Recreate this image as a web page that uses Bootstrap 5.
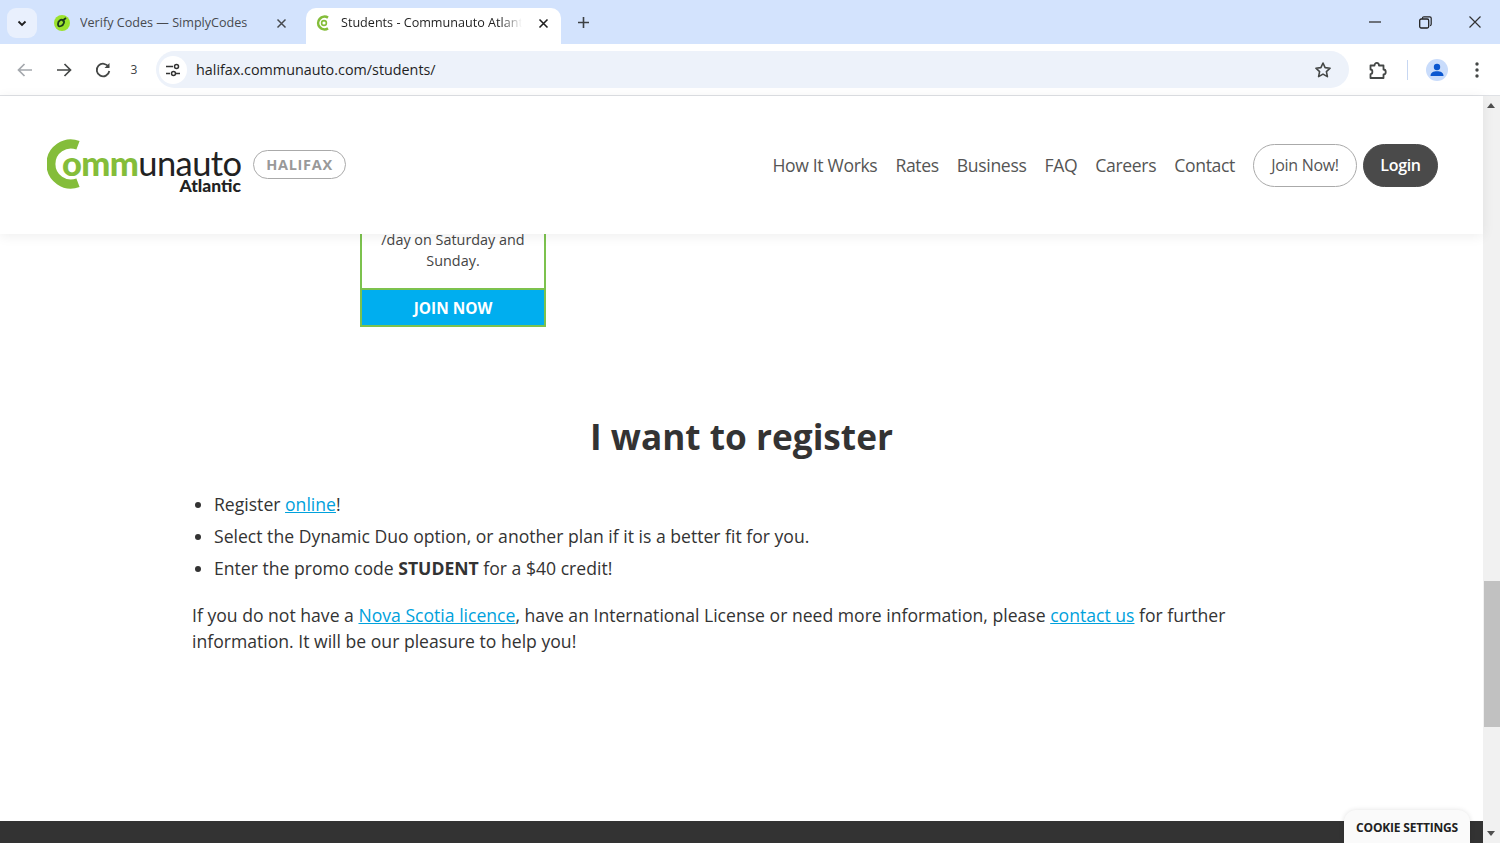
<!DOCTYPE html>
<html lang="en">
<head>
  <meta charset="UTF-8" />
  <meta name="viewport" content="width=device-width, initial-scale=1.0"/>
  <title>Students - Communauto Atlantic</title>
  <link href="https://cdn.jsdelivr.net/npm/bootstrap@5.3.0/dist/css/bootstrap.min.css" rel="stylesheet">
  <style>
    html, body { height: 843px; overflow: hidden; }
    body { font-family: "Open Sans", "Liberation Sans", sans-serif; color: #333; background: #fff; }

    /* browser frame */
    .tab-strip { height: 44px; background: #d3e3fd; font-family: "Open Sans", "Liberation Sans", sans-serif; font-size: 12.6px; color: #3c4043; padding: 8px 0 0 7px; }
    .tab-menu { width: 30px; height: 30px; border-radius: 9px; background: #e9f0fd; }
    .tab-item { height: 36px; width: 255px; padding: 0 12px 6px 10px; border-radius: 10px 10px 0 0; }
    .tab-idle { width: 257px; margin: 0 4px 0 8px; padding-left: 8px; padding-right: 15px; color: #474a4f; }
    .tab-active { background: #fff; color: #1f1f1f; }
    .tab-title { flex: 1; white-space: nowrap; overflow: hidden; margin-left: 9px; }
    .tab-active .tab-title { margin-left: 11px; }
    .tab-fade { -webkit-mask-image: linear-gradient(90deg, #000 88%, transparent 100%); mask-image: linear-gradient(90deg, #000 88%, transparent 100%); }
    .win-btn { width: 50px; height: 36px; margin-top: -4px; }
    .tool-bar { height: 52px; background: #fff; border-radius: 10px 10px 0 0; border-bottom: 1px solid #dfe1e5; padding: 0 14px 0 15px; }
    .tool-btn { width: 20px; height: 20px; }
    .reload-count { font-family: "Open Sans", sans-serif; font-size: 12px; color: #3c4043; width: 20px; text-align: center; margin-left: 11px; }
    .omni-box { height: 37px; width: 1193px; margin-left: 12px; background: #edf2fa; border-radius: 19px; padding: 0 17px 0 3px; font-family: "Open Sans", "Liberation Sans", sans-serif; font-size: 14.35px; color: #1f1f1f; }
    .omni-site { width: 28px; height: 28px; border-radius: 50%; background: #fff; margin-right: 9px; }
    .tool-sep { width: 1px; height: 20px; background: #c7d7f2; margin-left: 19px; }
    .avatar-dot { width: 22px; height: 22px; border-radius: 50%; background: #c9dcfb; margin-left: 18px; }

    /* page */
    .page-view { height: 747px; }
    .page-col { width: 1483px; height: 747px; }
    .scroll-rail { width: 17px; height: 747px; background: #f1f1f1; }
    .scroll-thumb { position: absolute; left: 1px; right: 0; top: 485px; height: 146px; background: #c1c1c1; }
    .scroll-arrow-up, .scroll-arrow-down { position: absolute; left: 4px; width: 0; height: 0; border-left: 4.5px solid transparent; border-right: 4.5px solid transparent; }
    .scroll-arrow-up { top: 7px; border-bottom: 5px solid #505050; }
    .scroll-arrow-down { bottom: 7px; border-top: 5px solid #505050; }

    .site-head { height: 138px; background: #fff; box-shadow: 0 2px 12px rgba(0,0,0,.07); z-index: 2; padding: 0 45px 0 46px; }
    .logo-box { width: 195px; height: 56px; text-decoration: none; }
    .logo-c { left: 1px; top: 2px; }
    .logo-word { position: absolute; left: 16px; top: 3px; font-family: "Lato", sans-serif; font-size: 34.5px; line-height: 46px; letter-spacing: -.6px; color: #222; white-space: nowrap; font-weight: 400; }
    .logo-word b { color: #84bd3a; font-weight: 900; }
    .logo-sub { position: absolute; right: 0; bottom: -2px; font-family: "Lato", sans-serif; font-weight: 900; font-size: 17.5px; line-height: 18px; color: #222; }
    .city-pill { margin-left: 12px; margin-top: -2px; height: 29px; width: 93px; border: 1px solid #aaa; border-radius: 15px; color: #999; font-weight: 700; font-size: 14.5px; letter-spacing: .7px; line-height: 27px; text-align: center; }
    .site-nav a { color: #555; font-size: 17.6px; letter-spacing: -.35px; text-decoration: none; margin-right: 18px; white-space: nowrap; }
    .site-nav .pill-join, .site-nav .pill-login { height: 43px; border-radius: 22px; font-size: 16px; letter-spacing: -.3px; line-height: 41px; text-align: center; padding: 0; }
    .site-nav .pill-join { width: 104px; border: 1px solid #aaa; color: #555; background: #fff; margin-right: 6px; }
    .site-nav .pill-login { width: 75px; border: 1px solid #4a4a4a; color: #fff; background: #4a4a4a; font-weight: 600; margin-right: 0; }

    .page-body { flex: 1; }
    .promo-box { width: 186px; margin-left: 360px; border: 2px solid #7cc24e; border-top: 0; text-align: center; font-size: 14.4px; line-height: 21px; color: #444; }
    .promo-text { padding: 0 12px 17px; margin-top: -5px; }
    .promo-cta { display: block; height: 37px; background: #00aeef; color: #fff; font-weight: 700; font-size: 15.4px; text-decoration: none; border-top: 2px solid #7cc24e; line-height: 37px; }
    .section-title { font-size: 35.2px; font-weight: 700; line-height: 44px; color: #333; text-align: center; margin: 87px 0 0 0; }
    .body-copy { padding: 0 250px 0 192px; font-size: 17.6px; line-height: 26px; color: #333; }
    .body-copy ul { margin: 33px 0 0 0; padding-left: 22px; }
    .body-copy li { margin-bottom: 6px; }
    .body-copy p { margin: 21px 0 0 0; }
    .body-copy a { color: #00a1dc; }
    .foot-bar { height: 22px; background: #333; flex: none; }
    .cookie-tab { position: absolute; right: 13px; bottom: 0; width: 126px; height: 33px; background: #fafafa; border-radius: 12px 12px 0 0; box-shadow: 0 0 5px rgba(0,0,0,.12); font-size: 12px; font-weight: 700; letter-spacing: -.2px; color: #222; line-height: 36px; text-align: center; white-space: nowrap; }
  </style>
</head>
<body>
  <div class="tab-strip d-flex align-items-start">
    <div class="tab-menu d-flex align-items-center justify-content-center">
      <svg width="12" height="12" viewBox="0 0 12 12"><path d="M2.5 4.5 6 8l3.5-3.5" fill="none" stroke="#1f1f1f" stroke-width="1.8"/></svg>
    </div>
    <div class="tab-item tab-idle d-flex align-items-center">
      <svg width="18" height="18" viewBox="0 0 18 18"><circle cx="9" cy="9" r="8" fill="#9be22d"/><path d="M5 10c0-3 3-5 5-4s1 5-2 6-3-1-3-2zM9 7l4-3" fill="none" stroke="#1b3a1b" stroke-width="1.8"/></svg>
      <span class="tab-title">Verify Codes — SimplyCodes</span>
      <svg width="11" height="11" viewBox="0 0 11 11"><path d="M1.5 1.5l8 8m0-8-8 8" stroke="#474a4f" stroke-width="1.5"/></svg>
    </div>
    <div class="tab-item tab-active d-flex align-items-center">
      <svg width="14" height="16" viewBox="0 0 14 16"><path d="M12 2.6A6.4 6.4 0 1 0 12 13.4" fill="none" stroke="#84bd3a" stroke-width="2.6"/><circle cx="8" cy="8" r="2.4" fill="none" stroke="#84bd3a" stroke-width="1.6"/></svg>
      <span class="tab-title tab-fade">Students - Communauto Atlantic</span>
      <svg class="ms-3" width="11" height="11" viewBox="0 0 11 11"><path d="M1.5 1.5l8 8m0-8-8 8" stroke="#1f1f1f" stroke-width="1.6"/></svg>
    </div>
    <svg class="ms-3 mt-2" width="13" height="13" viewBox="0 0 13 13"><path d="M6.5 1v11M1 6.5h11" stroke="#3c4043" stroke-width="1.6"/></svg>
    <div class="d-flex ms-auto">
      <div class="win-btn d-flex align-items-center justify-content-center"><svg width="12" height="12" viewBox="0 0 12 12"><path d="M0 6h12" stroke="#333" stroke-width="1.3"/></svg></div>
      <div class="win-btn d-flex align-items-center justify-content-center"><svg width="13" height="13" viewBox="0 0 13 13"><rect x=".7" y="3" width="9" height="9" rx="1.5" fill="none" stroke="#222" stroke-width="1.3"/><path d="M3.5 2.8V2.200c0-.8.6-1.400 1.400-1.400h5.900c.8 0 1.400.6 1.400 1.400v6c0 .8-.5 1.300-1.200 1.400" fill="none" stroke="#222" stroke-width="1.2"/></svg></div>
      <div class="win-btn d-flex align-items-center justify-content-center"><svg width="12" height="12" viewBox="0 0 12 12"><path d="M.5.5l11 11m0-11-11 11" stroke="#333" stroke-width="1.2"/></svg></div>
    </div>
  </div>

  <div class="tool-bar d-flex align-items-center">
    <svg class="tool-btn" viewBox="0 0 20 20"><path d="M17 10H4m5.500-6L3.500 10l6 6" fill="none" stroke="#a4a8ad" stroke-width="1.7"/></svg>
    <svg class="tool-btn" style="margin-left:19px" viewBox="0 0 20 20"><path d="M3 10h13m-5.500-6 6 6-6 6" fill="none" stroke="#444746" stroke-width="1.7"/></svg>
    <svg class="tool-btn" style="margin-left:19px" viewBox="0 0 20 20"><path d="M15.600 7A6.300 6.300 0 1 0 16.300 11" fill="none" stroke="#444746" stroke-width="1.8"/><path d="M16.500 3v5h-5z" fill="#444746"/></svg>
    <span class="reload-count">3</span>
    <div class="omni-box d-flex align-items-center">
      <span class="omni-site d-flex align-items-center justify-content-center">
        <svg width="16" height="16" viewBox="0 0 16 16"><path d="M1 4.500h7M1 11.500h4" stroke="#333" stroke-width="1.500"/><circle cx="11.500" cy="4.500" r="2" fill="none" stroke="#333" stroke-width="1.500"/><circle cx="8.500" cy="11.500" r="2" fill="none" stroke="#333" stroke-width="1.500"/><path d="M11 11.500h4" stroke="#333" stroke-width="1.500"/></svg>
      </span>
      <span>halifax.communauto.com/students/</span>
      <svg class="ms-auto" width="18" height="18" viewBox="0 0 18 18"><path d="M9 2l2.100 4.600 5 .6-3.700 3.400 1 5L9 13.100 4.600 15.600l1-5L1.900 7.200l5-.6z" fill="none" stroke="#444746" stroke-width="1.600" stroke-linejoin="round"/></svg>
    </div>
    <svg style="margin-left:19px" width="20" height="20" viewBox="0 0 20 20"><path d="M2.500 5.500h4c0-3.500 4.500-3.500 4.500 0h4.500v4c3 0 3 5 0 5v3.500h-13v-3.800c2.500 0 2.500-4.700 0-4.700z" fill="none" stroke="#444746" stroke-width="1.800" stroke-linejoin="round"/></svg>
    <span class="tool-sep"></span>
    <span class="avatar-dot d-flex align-items-center justify-content-center">
      <svg width="16" height="16" viewBox="0 0 16 16"><circle cx="8" cy="5" r="3.200" fill="#0b57d0"/><path d="M1.500 14c0-3.500 3-4.800 6.500-4.800s6.500 1.300 6.500 4.800z" fill="#0b57d0"/></svg>
    </span>
    <svg style="margin-left:27px" width="4" height="16" viewBox="0 0 4 16"><circle cx="2" cy="2" r="1.700" fill="#444746"/><circle cx="2" cy="8" r="1.700" fill="#444746"/><circle cx="2" cy="14" r="1.700" fill="#444746"/></svg>
  </div>

  <div class="page-view d-flex">
    <div class="page-col d-flex flex-column position-relative">
      <header class="site-head d-flex align-items-center position-relative">
        <a class="logo-box position-relative d-block" href="#">
          <svg class="logo-c position-absolute" width="36" height="50" viewBox="0 0 36 50"><path d="M31 6.300A20 20 0 1 0 31 43.700" fill="none" stroke="#84bd3a" stroke-width="9"/></svg>
          <span class="logo-word"><b>omm</b>unauto</span>
          <span class="logo-sub">Atlantic</span>
        </a>
        <span class="city-pill">HALIFAX</span>
        <nav class="site-nav d-flex align-items-center ms-auto">
          <a href="#">How It Works</a>
          <a href="#">Rates</a>
          <a href="#">Business</a>
          <a href="#">FAQ</a>
          <a href="#">Careers</a>
          <a href="#">Contact</a>
          <a href="#" class="pill-join">Join Now!</a>
          <a href="#" class="pill-login">Login</a>
        </nav>
      </header>

      <main class="page-body">
        <div class="promo-box">
          <div class="promo-text">/day on Saturday and Sunday.</div>
          <a href="#" class="promo-cta">JOIN NOW</a>
        </div>
        <h2 class="section-title">I want to register</h2>
        <div class="body-copy">
          <ul>
            <li>Register <a href="#">online</a>!</li>
            <li>Select the Dynamic Duo option, or another plan if it is a better fit for you.</li>
            <li>Enter the promo code <strong>STUDENT</strong> for a $40 credit!</li>
          </ul>
          <p>If you do not have a <a href="#">Nova Scotia licence</a>, have an International License or need more information, please <a href="#">contact us</a> for further information. It will be our pleasure to help you!</p>
        </div>
      </main>
      <div class="foot-bar"></div>
      <div class="cookie-tab">COOKIE SETTINGS</div>
    </div>
    <div class="scroll-rail position-relative">
      <span class="scroll-arrow-up"></span>
      <span class="scroll-thumb"></span>
      <span class="scroll-arrow-down"></span>
    </div>
  </div>

  <script src="https://cdn.jsdelivr.net/npm/bootstrap@5.3.0/dist/js/bootstrap.bundle.min.js"></script>
</body>
</html>
